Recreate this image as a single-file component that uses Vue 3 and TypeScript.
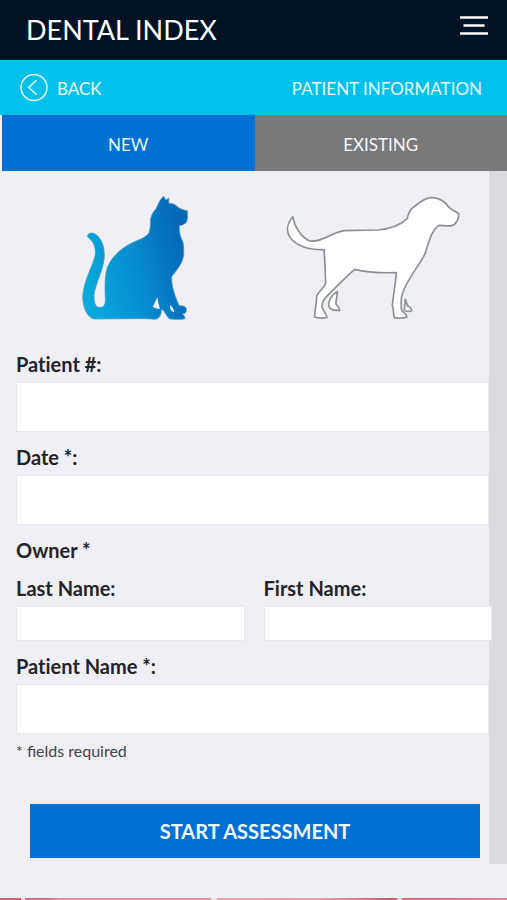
<script setup lang="ts">
import { ref } from 'vue'

type Species = 'cat' | 'dog'
type Tab = 'new' | 'existing'

const tab = ref<Tab>('new')
const species = ref<Species>('cat')
const patientNumber = ref('')
const visitDate = ref('')
const lastName = ref('')
const firstName = ref('')
const patientName = ref('')
</script>

<template>
  <div class="app">
    <header class="top">
      <h1 class="title">DENTAL INDEX</h1>
      <button class="menu" type="button" aria-label="Menu">
        <svg width="28" height="20" viewBox="0 0 28 20" fill="none" stroke="#fff" stroke-width="2.4">
          <path d="M0 1.5H28M3.5 9.5H24.5M0 17.5H28" />
        </svg>
      </button>
    </header>

    <nav class="bar">
      <a class="back" href="#back">
        <svg width="28" height="28" viewBox="0 0 28 28" fill="none" stroke="#e2fbff" stroke-width="1.5">
          <circle cx="14" cy="13.5" r="13" />
          <path d="M16.8 6L8.7 13.5L16.8 20.8" />
        </svg>
        <span>BACK</span>
      </a>
      <span class="section">PATIENT INFORMATION</span>
    </nav>

    <div class="tabs" role="tablist">
      <button class="tab" :class="{ active: tab === 'new' }" type="button" role="tab" :aria-selected="tab === 'new'" @click="tab = 'new'">NEW</button>
      <button class="tab" :class="{ active: tab === 'existing' }" type="button" role="tab" :aria-selected="tab === 'existing'" @click="tab = 'existing'">EXISTING</button>
    </div>

    <main class="panel">
      <form class="form" @submit.prevent>
        <div class="pets">
          <button class="pet" type="button" aria-label="Cat" :aria-pressed="species === 'cat'" @click="species = 'cat'">
            <svg width="130" height="145" viewBox="-3 0 390 435">
              <defs>
                <linearGradient id="coat" gradientUnits="userSpaceOnUse" x1="40" y1="270" x2="345" y2="190">
                  <stop offset="0" stop-color="#09a9dc" />
                  <stop offset="0.45" stop-color="#0790d1" />
                  <stop offset="0.8" stop-color="#0574c0" />
                  <stop offset="1" stop-color="#0669b7" />
                </linearGradient>
              </defs>
              <path
                fill="url(#coat)" stroke="#4c9dbd" stroke-width="2" stroke-linejoin="round"
                d="M281 34L288 45L297 39L296 54C307 55 317 58 324 67C333 73 342 75 353 78L352 91C354 98 351 104 350 111C344 118 338 120 328 122C328 137 329 148 334 160C342 173 342 190 341 211C337 238 319 257 305 275C304 295 310 315 316 334C321 346 324 356 329 363C337 361 347 363 349 372C351 382 345 386 337 387C342 391 347 397 344 402C330 404 314 404 300 402C291 397 288 388 282 379C277 373 271 371 274 377C274 389 267 403 254 403C238 401 220 401 200 401L73 402C53 398 38 370 38 335C42 280 69 245 76 208C77 185 70 170 57 160C48 151 54 143 68 144C91 151 105 181 103 216C101 254 78 291 72 330C72 354 76 366 88 367C100 368 105 361 106 347C105 310 103 276 112 247C129 208 161 184 198 168C217 160 231 154 237 143C240 132 243 118 241 105C245 88 250 79 258 72C264 58 270 42 281 34Z"
              />
              <path fill="#f4f7fc" d="M262 337C256 348 254 357 248 365C256 370 263 371 270 371C266 360 264 349 262 337ZM301 360C299 368 301 378 313 382C311 372 307 365 301 360Z" />
            </svg>
          </button>
          <button class="pet" type="button" aria-label="Dog" :aria-pressed="species === 'dog'" @click="species = 'dog'">
            <svg width="200" height="145" viewBox="-12 0 600 435" fill="#fff" stroke="#8b9097" stroke-width="5" stroke-linejoin="round">
              <path d="M187 320C173 326 160 344 161 363C164 375 179 377 194 376C195 368 187 363 183 357C182 345 187 337 187 320ZM391 343L388 376C394 380 405 380 410 377C409 369 402 363 398 363Z" />
              <path d="M53 95C59 127 79 158 104 168C139 174 169 143 207 137L307 135C347 132 379 118 397 101C399 88 401 80 411 70C429 57 446 39 468 37C489 39 506 47 515 58C520 70 535 77 551 85C552 95 547 110 537 119C525 126 510 121 491 121C466 140 461 177 449 209C429 246 397 284 384 321C376 339 378 360 380 377C388 385 396 386 396 396C386 400 369 400 358 398C354 388 357 374 352 362C355 328 362 296 364 263C319 264 276 263 239 253C216 273 195 295 172 317C157 332 141 344 141 364C144 379 154 386 156 397C145 400 129 399 119 396C119 374 126 352 125 333C132 318 147 308 152 296C151 260 150 228 147 194C100 195 70 185 49 162C29 138 39 112 53 95Z" />
            </svg>
          </button>
        </div>

        <div class="field">
          <label for="patient-number">Patient #:</label>
          <input id="patient-number" v-model="patientNumber" type="text" />
        </div>
        <div class="field">
          <label for="visit-date">Date *:</label>
          <input id="visit-date" v-model="visitDate" type="text" required />
        </div>
        <fieldset class="owner">
          <legend>Owner *</legend>
          <div class="names">
            <div class="field">
              <label for="last-name">Last Name:</label>
              <input id="last-name" v-model="lastName" class="short" type="text" required />
            </div>
            <div class="field">
              <label for="first-name">First Name:</label>
              <input id="first-name" v-model="firstName" class="short" type="text" required />
            </div>
          </div>
        </fieldset>
        <div class="field">
          <label for="patient-name">Patient Name *:</label>
          <input id="patient-name" v-model="patientName" type="text" required />
        </div>
        <p class="note">* fields required</p>
        <button class="start" type="submit">START ASSESSMENT</button>
      </form>
    </main>

    <footer class="gums"></footer>
  </div>
</template>

<style>
body {
  background: #f0eff5;
}
</style>

<style scoped>
.app {
  font-family: Lato, "Liberation Sans", sans-serif;
  color: #23232a;
  background: #f0eff5;
}

button,
input {
  font: inherit;
  margin: 0;
  padding: 0;
  border: 0;
  border-radius: 0;
  box-sizing: border-box;
}

button {
  background: none;
  cursor: pointer;
}

svg {
  display: block;
}

.top {
  display: flex;
  justify-content: space-between;
  align-items: flex-start;
  padding: 12px 19px 12px 26px;
  background: #001324;
  color: #fff;
}

.title {
  margin: 0;
  font-size: 27px;
  line-height: 36px;
  font-weight: 400;
}

.menu {
  padding-top: 4px;
}

.bar {
  display: flex;
  justify-content: space-between;
  align-items: center;
  height: 55px;
  box-sizing: border-box;
  padding: 1px 25px 0 20px;
  background: #02c0ea;
  color: #e2fbff;
  font-size: 17px;
}

.back {
  display: flex;
  align-items: center;
  gap: 9px;
  color: inherit;
  text-decoration: none;
}

.tabs {
  display: grid;
  grid-template-columns: 1fr 1fr;
  padding-left: 2px;
}

.tab {
  height: 56px;
  padding-top: 3px;
  background: #79797b;
  color: #f4f6f8;
  font-size: 17px;
}

.tab.active {
  background: #0070d3;
  color: #e6f7ff;
}

.panel {
  padding-right: 18px;
  background: #dbdade;
}

.form {
  display: flex;
  flex-direction: column;
  gap: 13px;
  padding: 14px 0 6px 16px;
  background: #f0eff5;
}

.pets {
  display: grid;
  grid-template-columns: 1fr 1fr;
  justify-items: center;
  margin-bottom: 9px;
}

.field {
  display: flex;
  flex-direction: column;
  gap: 6px;
  min-width: 0;
}

label,
legend {
  padding: 0;
  font-size: 20px;
  line-height: 24px;
  font-weight: 700;
  font-variant-ligatures: none;
}

input {
  width: 100%;
  height: 50px;
  padding: 0 12px;
  border: 1px solid #e8e8ec;
  background: #fff;
}

.short {
  height: 35px;
}

.owner {
  min-width: 0;
  margin: 0;
  padding: 0;
  border: 0;
}

.names {
  display: grid;
  grid-template-columns: 1fr 1fr;
  gap: 19px;
  margin: 14px -3px 0 0;
}

.note {
  margin: -6px 0 0;
  font-size: 16px;
  line-height: 20px;
  color: #45454c;
}

.start {
  height: 54px;
  margin: 30px 9px 0 14px;
  background: #0070d3;
  color: #f0faff;
  font-size: 20px;
  font-weight: 700;
}

.gums {
  height: 2px;
  margin-top: 34px;
  background: linear-gradient(90deg, #d4606c 0 21px, #f3dbe0 21px 25px, #c8707c 25px 48px, #e08d96 60px 210px, #f6e4e8 212px 216px, #e9a3aa 218px, #dfa0a8 320px, #c9586c 396px, #f3dbe0 398px 401px, #d6687a 403px, #de8290 507px);
}
</style>
